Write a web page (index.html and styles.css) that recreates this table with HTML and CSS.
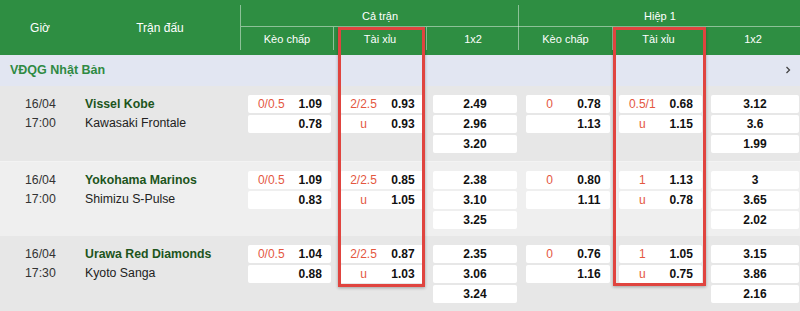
FILE: index.html
```html
<!DOCTYPE html>
<html lang="vi">
<head>
<meta charset="utf-8">
<title>Kèo bóng đá</title>
<link rel="stylesheet" href="styles.css">
</head>
<body>
<div class="board">
  <div class="head">
    <div class="h-time">Giờ</div>
    <div class="h-match">Trận đấu</div>
    <div class="h-group g-ft">
      <div class="g-title">Cả trận</div>
      <div class="g-subs"><span>Kèo chấp</span><span>Tài xỉu</span><span>1x2</span></div>
    </div>
    <div class="h-group g-h1">
      <div class="g-title">Hiệp 1</div>
      <div class="g-subs"><span>Kèo chấp</span><span>Tài xỉu</span><span>1x2</span></div>
    </div>
  </div>

  <div class="league">
    <span class="league-name">VĐQG Nhật Bản</span>
    <svg class="chev" width="6" height="8" viewBox="0 0 6 8"><polyline points="1.5,1 4.5,4 1.5,7" fill="none" stroke="#444" stroke-width="1.3"/></svg>
  </div>

  <div class="match dark">
    <div class="m-time"><div>16/04</div><div>17:00</div></div>
    <div class="m-teams"><div class="home">Vissel Kobe</div><div>Kawasaki Frontale</div></div>
    <div class="col">
      <div class="cell"><span class="lab">0/0.5</span><span class="val">1.09</span></div>
      <div class="cell"><span class="lab"></span><span class="val">0.78</span></div>
    </div>
    <div class="col">
      <div class="cell"><span class="lab">2/2.5</span><span class="val">0.93</span></div>
      <div class="cell"><span class="lab">u</span><span class="val">0.93</span></div>
    </div>
    <div class="col">
      <div class="cell one"><span class="val">2.49</span></div>
      <div class="cell one"><span class="val">2.96</span></div>
      <div class="cell one"><span class="val">3.20</span></div>
    </div>
    <div class="col">
      <div class="cell"><span class="lab">0</span><span class="val">0.78</span></div>
      <div class="cell"><span class="lab"></span><span class="val">1.13</span></div>
    </div>
    <div class="col">
      <div class="cell"><span class="lab">0.5/1</span><span class="val">0.68</span></div>
      <div class="cell"><span class="lab">u</span><span class="val">1.15</span></div>
    </div>
    <div class="col">
      <div class="cell one"><span class="val">3.12</span></div>
      <div class="cell one"><span class="val">3.6</span></div>
      <div class="cell one"><span class="val">1.99</span></div>
    </div>
  </div>

  <div class="match light">
    <div class="m-time"><div>16/04</div><div>17:00</div></div>
    <div class="m-teams"><div class="home">Yokohama Marinos</div><div>Shimizu S-Pulse</div></div>
    <div class="col">
      <div class="cell"><span class="lab">0/0.5</span><span class="val">1.09</span></div>
      <div class="cell"><span class="lab"></span><span class="val">0.83</span></div>
    </div>
    <div class="col">
      <div class="cell"><span class="lab">2/2.5</span><span class="val">0.85</span></div>
      <div class="cell"><span class="lab">u</span><span class="val">1.05</span></div>
    </div>
    <div class="col">
      <div class="cell one"><span class="val">2.38</span></div>
      <div class="cell one"><span class="val">3.10</span></div>
      <div class="cell one"><span class="val">3.25</span></div>
    </div>
    <div class="col">
      <div class="cell"><span class="lab">0</span><span class="val">0.80</span></div>
      <div class="cell"><span class="lab"></span><span class="val">1.11</span></div>
    </div>
    <div class="col">
      <div class="cell"><span class="lab">1</span><span class="val">1.13</span></div>
      <div class="cell"><span class="lab">u</span><span class="val">0.78</span></div>
    </div>
    <div class="col">
      <div class="cell one"><span class="val">3</span></div>
      <div class="cell one"><span class="val">3.65</span></div>
      <div class="cell one"><span class="val">2.02</span></div>
    </div>
  </div>

  <div class="match dark">
    <div class="m-time"><div>16/04</div><div>17:30</div></div>
    <div class="m-teams"><div class="home">Urawa Red Diamonds</div><div>Kyoto Sanga</div></div>
    <div class="col">
      <div class="cell"><span class="lab">0/0.5</span><span class="val">1.04</span></div>
      <div class="cell"><span class="lab"></span><span class="val">0.88</span></div>
    </div>
    <div class="col">
      <div class="cell"><span class="lab">2/2.5</span><span class="val">0.87</span></div>
      <div class="cell"><span class="lab">u</span><span class="val">1.03</span></div>
    </div>
    <div class="col">
      <div class="cell one"><span class="val">2.35</span></div>
      <div class="cell one"><span class="val">3.06</span></div>
      <div class="cell one"><span class="val">3.24</span></div>
    </div>
    <div class="col">
      <div class="cell"><span class="lab">0</span><span class="val">0.76</span></div>
      <div class="cell"><span class="lab"></span><span class="val">1.16</span></div>
    </div>
    <div class="col">
      <div class="cell"><span class="lab">1</span><span class="val">1.05</span></div>
      <div class="cell"><span class="lab">u</span><span class="val">0.75</span></div>
    </div>
    <div class="col">
      <div class="cell one"><span class="val">3.15</span></div>
      <div class="cell one"><span class="val">3.86</span></div>
      <div class="cell one"><span class="val">2.16</span></div>
    </div>
  </div>

  <div class="hl hl-ft"></div>
  <div class="hl hl-h1"></div>
</div>
</body>
</html>
```

FILE: styles.css
```css
* { box-sizing: border-box; }
html, body { margin: 0; padding: 0; }
body {
  width: 800px;
  height: 311px;
  overflow: hidden;
  background: #e7e7e7;
  font-family: "Liberation Sans", Arial, sans-serif;
  color: #222;
}
.board { position: relative; width: 800px; }

/* header */
.head {
  display: grid;
  grid-template-columns: 80px 160px 278px 282px;
  height: 55px;
  padding: 5px 0;
  background: #2e8e42;
  color: #fff;
}
.h-time, .h-match {
  display: flex;
  align-items: center;
  justify-content: center;
  font-size: 12px;
}
.h-group {
  display: grid;
  grid-template-rows: 22px 23px;
  border-left: 1px solid rgba(255,255,255,0.45);
}
.g-title {
  display: flex;
  align-items: center;
  justify-content: center;
  font-size: 11px;
  border-bottom: 1px solid rgba(255,255,255,0.45);
}
.g-subs { display: grid; font-size: 11px; }
.g-ft .g-subs { grid-template-columns: 92px 93px 93px; }
.g-h1 .g-subs { grid-template-columns: 93px 92px 97px; }
.g-subs span {
  display: flex;
  align-items: center;
  justify-content: center;
}
.g-subs span + span { border-left: 1px solid rgba(255,255,255,0.45); }

/* league */
.league {
  height: 31px;
  background: #e2e6f2;
  display: flex;
  align-items: center;
  justify-content: space-between;
  padding: 0 9px 2px 10px;
}
.league-name {
  color: #2f8a43;
  font-weight: bold;
  font-size: 12.5px;
}

/* match rows */
.match {
  display: grid;
  grid-template-columns: 80px 160px 92px 93px 93px 93px 92px 97px;
  height: 75px;
  padding-top: 9px;
}
.match.dark { background: #e7e7e7; }
.match.light { background: #efefef; border-top: 1px solid #f3f3f3; }
.m-time, .m-teams {
  font-size: 12.3px;
  line-height: 18.5px;
}
.m-time { padding-left: 25px; color: #333; }
.m-teams { padding-left: 5px; color: #222; }
.m-teams .home { color: #1d551c; font-weight: bold; }

.col {
  display: flex;
  flex-direction: column;
  gap: 2px;
  margin: 0 1px 0 8px;
}
.cell {
  height: 18px;
  background: #fff;
  border-radius: 2px;
  display: grid;
  grid-template-columns: 1fr 1fr;
  align-items: center;
  font-size: 12px;
}
.cell.one { grid-template-columns: 1fr; }
.lab {
  text-align: center;
  color: #e4573f;
  padding-left: 5px;
}
.val {
  text-align: center;
  font-weight: bold;
  color: #111;
}

/* highlight boxes */
.hl {
  position: absolute;
  top: 27px;
  border: 3px solid #e0443f;
  box-shadow: 0 1px 3px rgba(0,0,0,0.3);
  pointer-events: none;
}
.hl-ft { left: 338px; width: 87px; height: 260px; }
.hl-h1 { left: 613px; width: 93px; height: 259px; }
```
